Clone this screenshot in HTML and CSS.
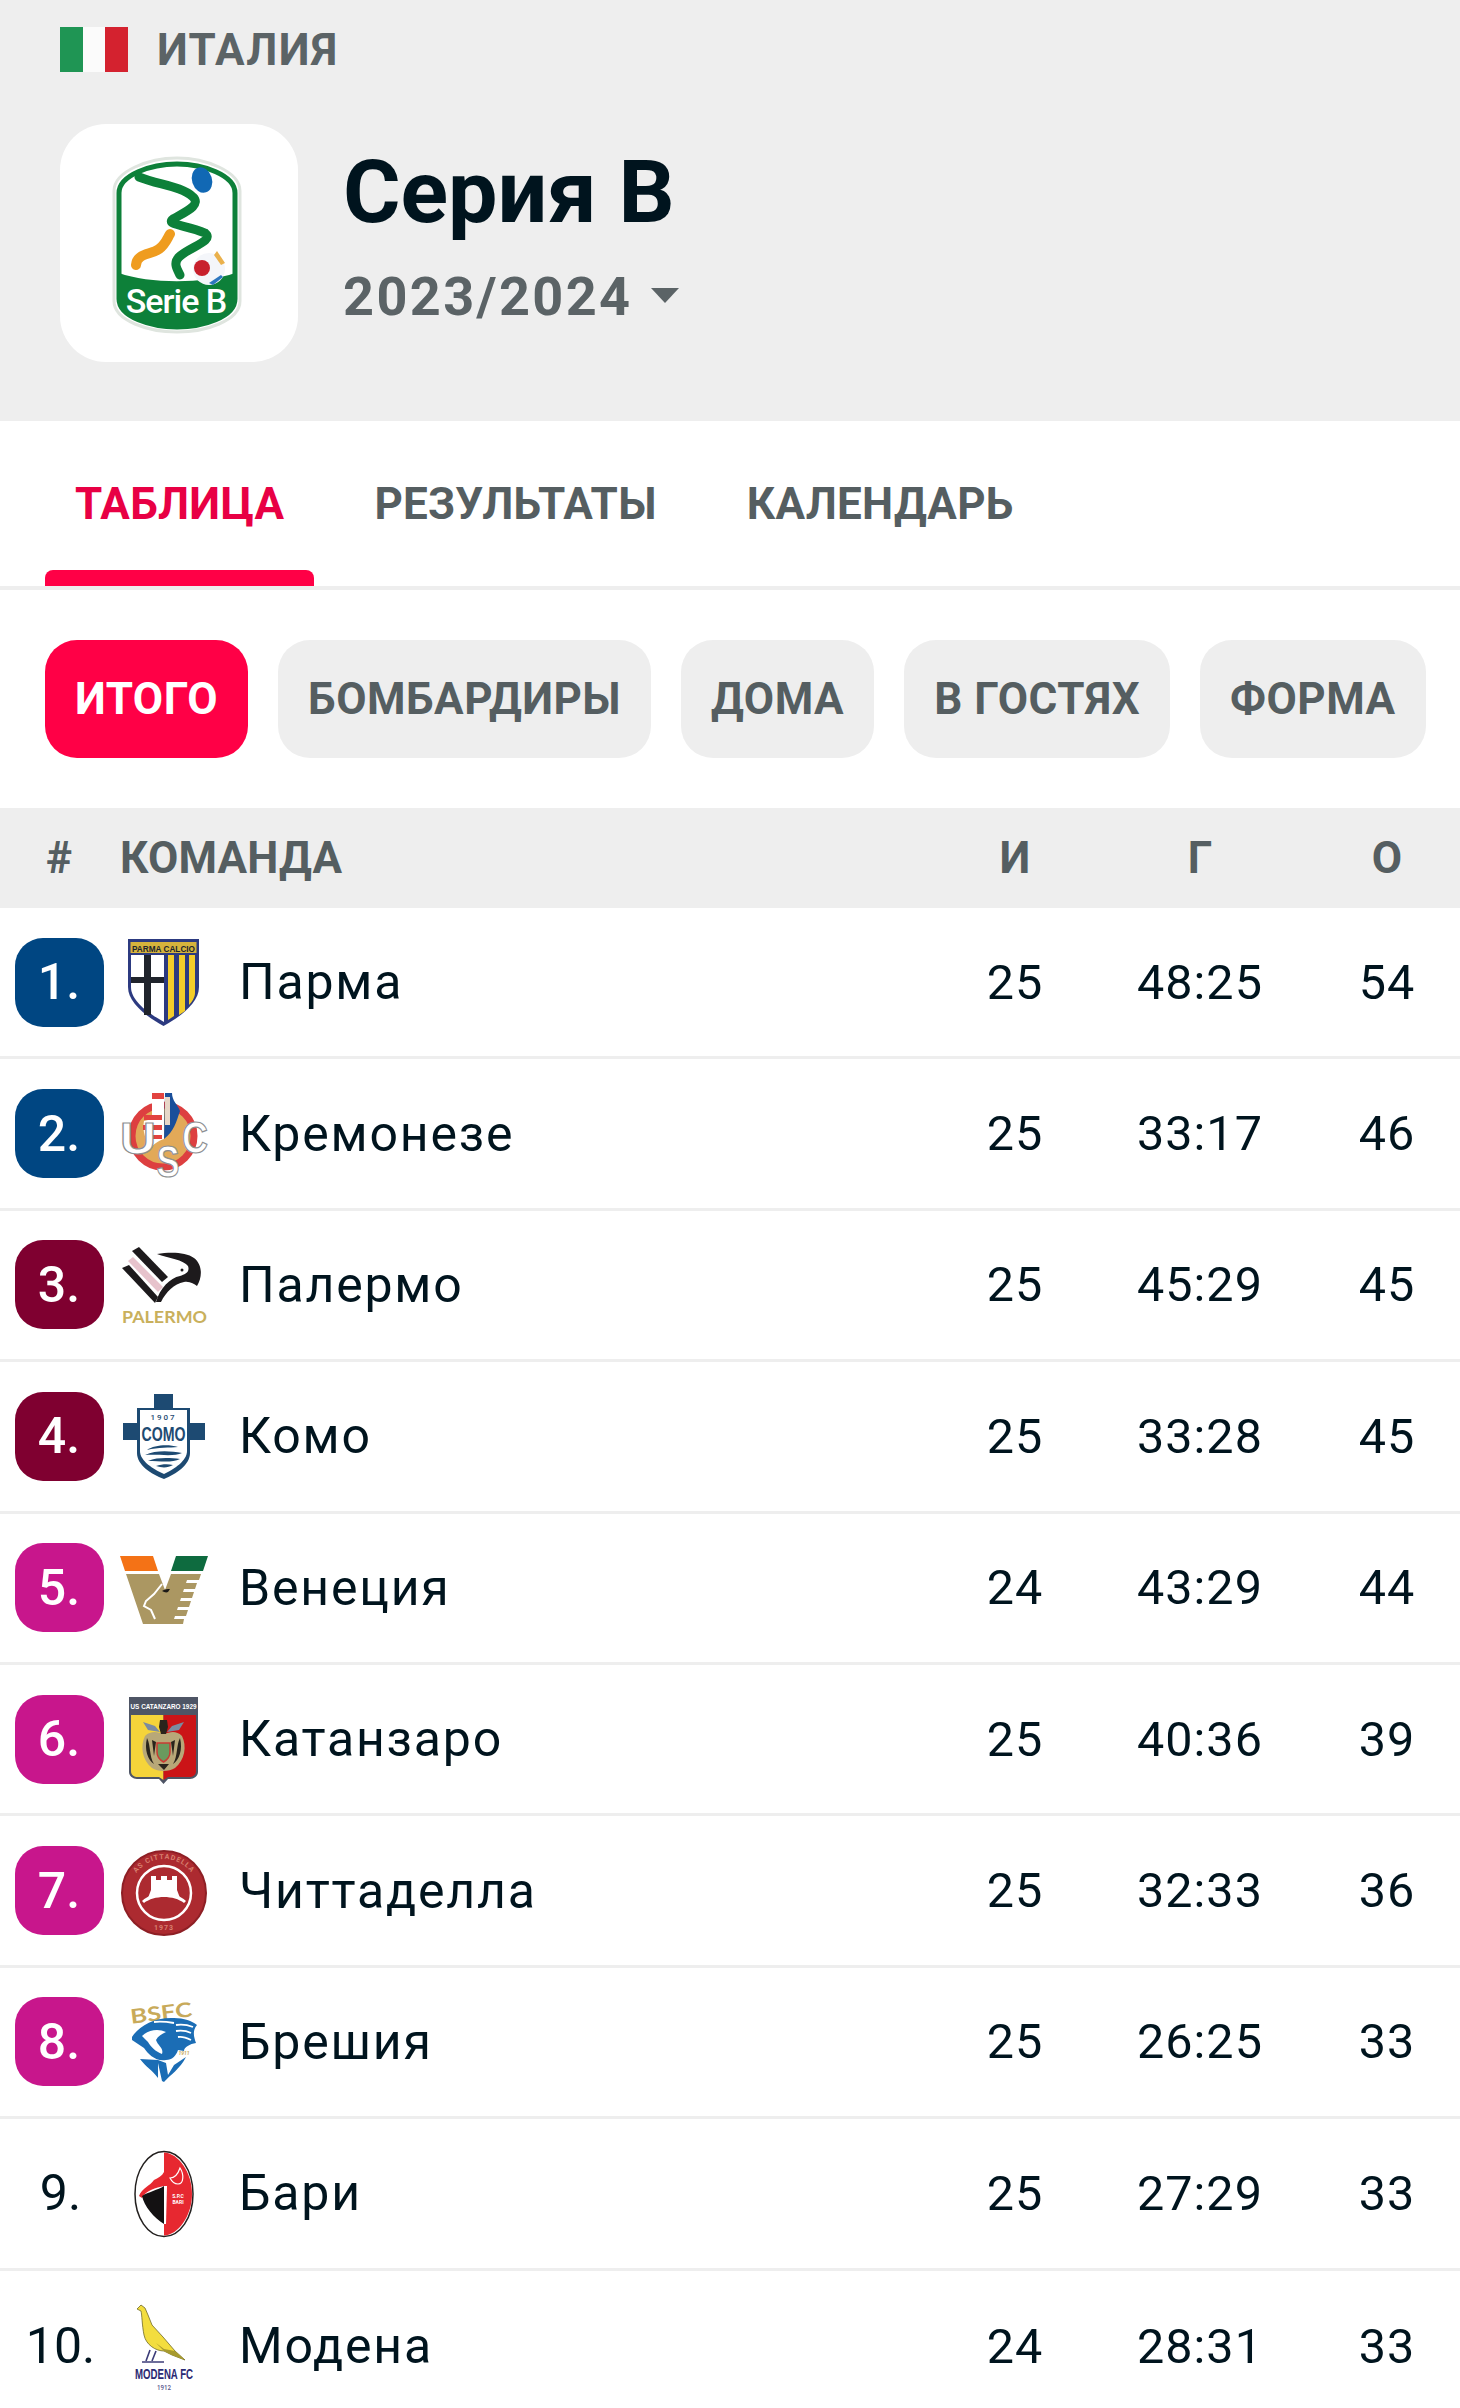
FILE: index.html
```html
<!DOCTYPE html>
<html lang="ru">
<head>
<meta charset="utf-8">
<title>Серия B</title>
<link rel="stylesheet" href="styles.css">
</head>
<body>
<header class="league">
  <div class="country">
    <span class="flag"><i class="flag-g"></i><i class="flag-w"></i><i class="flag-r"></i></span>
    <span class="country-name">ИТАЛИЯ</span>
  </div>
  <div class="league-main">
    <div class="tile">
      <svg class="serie-logo" viewBox="0 0 180 200">
        <path d="M25 48C25 28 60 15 88 15C116 15 151 28 151 48V158C151 178 116 189 88 189C60 189 25 178 25 158Z" fill="#fff" stroke="#dfe5df" stroke-width="3"/>
        <path d="M30 50C30 32 62 21 88 21C114 21 146 32 146 50V156C146 174 114 184 88 184C62 184 30 174 30 156Z" fill="#fff" stroke="#0d8039" stroke-width="5"/>
        <path d="M30 130C60 141 116 141 146 130V156C146 174 114 184 88 184C62 184 30 174 30 156Z" fill="#0d8039"/>
        <path d="M50 34C70 42 92 43 104 54C112 62 98 68 84 76C76 82 98 82 116 90C126 98 100 104 90 114C84 120 88 126 91 132" fill="none" stroke="#0d8039" stroke-width="9" stroke-linecap="round"/>
        <ellipse cx="113" cy="37" rx="10" ry="13" fill="#1168b4" transform="rotate(-18 113 37)"/>
        <path d="M47 122C48 110 62 112 70 106C76 102 78 96 81 91" fill="none" stroke="#ef9c1f" stroke-width="10" stroke-linecap="round"/>
        <circle cx="120" cy="126" r="16" fill="#f4f6fa"/>
        <circle cx="113" cy="125" r="8" fill="#c8202c"/>
        <path d="M128 108L136 120L132 122L125 112Z" fill="#eab14c"/>
        <path d="M120 140L132 132L134 134L124 142Z" fill="#2d76bf"/>
        <text class="serie-text" x="87" y="170" text-anchor="middle">Serie B</text>
      </svg>
    </div>
    <div class="league-title">
      <h1>Серия B</h1>
      <div class="season"><span>2023/2024</span><i class="caret"></i></div>
    </div>
  </div>
</header>

<nav class="tabs">
  <a class="tab tab-active">ТАБЛИЦА</a>
  <a class="tab">РЕЗУЛЬТАТЫ</a>
  <a class="tab">КАЛЕНДАРЬ</a>
</nav>

<div class="pills">
  <span class="pill pill-active">ИТОГО</span>
  <span class="pill">БОМБАРДИРЫ</span>
  <span class="pill">ДОМА</span>
  <span class="pill">В ГОСТЯХ</span>
  <span class="pill">ФОРМА</span>
</div>

<div class="thead">
  <span class="th-rank">#</span>
  <span class="th-team">КОМАНДА</span>
  <span class="num">И</span>
  <span class="num">Г</span>
  <span class="num">О</span>
</div>

<div class="row">
  <div class="rank"><span class="badge blue">1.</span></div>
  <svg class="crest" viewBox="0 0 90 90">
    <path d="M10 2H81V50C81 66 62 80 45.500 89C29 80 10 66 10 50Z" fill="#2c3a80"/>
    <path d="M13 18H46V85C30 76 13 64 13 50Z" fill="#fff"/>
    <rect x="26" y="18" width="7" height="60" fill="#20242c"/>
    <rect x="13" y="40" width="33" height="6" fill="#20242c"/>
    <path d="M50 18H56V79L50 83ZM61 18H67V74L61 78ZM71 18H77V56C77 60 74 65 71 68Z" fill="#f3cd2a"/>
    <rect x="12.500" y="5" width="66" height="11" fill="#d6b33c"/>
    <text class="t-parma" x="45.500" y="14.500" text-anchor="middle" textLength="63" lengthAdjust="spacingAndGlyphs">PARMA CALCIO</text>
  </svg>
  <span class="name">Парма</span><span class="num val">25</span><span class="num val">48:25</span><span class="num val">54</span>
</div>

<div class="row">
  <div class="rank"><span class="badge blue">2.</span></div>
  <svg class="crest" viewBox="0 0 90 90">
    <circle cx="45" cy="47" r="31" fill="#e2a958" stroke="#dd3f40" stroke-width="7"/>
    <path d="M34 4H46V50C40 52 34 56 33 60C28 52 24 42 26 32L34 30Z" fill="#fff"/>
    <path d="M26 26H44V31H26ZM25 36H44V41H25ZM28 46H44V50H28Z" fill="#e2433f"/>
    <path d="M34 4H46V10H34Z" fill="#e2433f"/>
    <path d="M47 4H54C54 12 60 16 62 22C58 34 56 42 46 50Z" fill="#1a4f9a"/>
    <path d="M47 8H52V36H47Z" fill="#e7d7c8"/>
    <text class="t-usc" x="20" y="65" text-anchor="middle" textLength="36" lengthAdjust="spacingAndGlyphs">U</text>
    <text class="t-usc" x="50" y="88" text-anchor="middle" textLength="23" lengthAdjust="spacingAndGlyphs">S</text>
    <text class="t-usc" x="77" y="64" text-anchor="middle" textLength="26" lengthAdjust="spacingAndGlyphs">C</text>
  </svg>
  <span class="name">Кремонезе</span><span class="num val">25</span><span class="num val">33:17</span><span class="num val">46</span>
</div>

<div class="row">
  <div class="rank"><span class="badge maroon">3.</span></div>
  <svg class="crest" viewBox="0 0 90 90">
    <path d="M14 11L21 7L50 37L44 42Z" fill="#1d1a1c"/>
    <path d="M10 21L15 17L45 47L40 52Z" fill="#e7c3cc"/>
    <path d="M4 28L11 25L40 57L37 63Z" fill="#1d1a1c"/>
    <path d="M39 14C52 12 68 12 76 18C84 24 85 36 79 46C76 44 72 41 66 42C56 44 48 52 43 62H38C42 48 52 38 62 36C68 34 72 32 70 26C66 20 50 18 39 14Z" fill="#1d1a1c"/>
    <circle cx="64" cy="30" r="1.500" fill="#1d1a1c"/>
    <text class="t-pal" x="46.500" y="83" text-anchor="middle" textLength="85" lengthAdjust="spacingAndGlyphs">PALERMO</text>
  </svg>
  <span class="name">Палермо</span><span class="num val">25</span><span class="num val">45:29</span><span class="num val">45</span>
</div>

<div class="row">
  <div class="rank"><span class="badge maroon">4.</span></div>
  <svg class="crest" viewBox="0 0 90 90">
    <path d="M36 3H55V17H72V32H87V49H72V62C72 74 58 83 46 88C33 83 19 74 19 62V49H5V32H19V17H36Z" fill="#1d4a72"/>
    <path d="M22 19H69V60C69 70 56 78 46 83C35 78 22 70 22 60Z" fill="#fff"/>
    <text class="t-year" x="45.500" y="29" text-anchor="middle">1907</text>
    <text class="t-como" x="45.500" y="50" text-anchor="middle" textLength="44" lengthAdjust="spacingAndGlyphs">COMO</text>
    <path d="M29 59C36 54 50 53 60 56C52 57 40 56 29 59ZM27 64C38 59 52 60 64 62C56 66 40 63 27 64ZM30 70C40 66 52 67 62 68C54 72 42 70 30 70ZM38 75C44 73 50 73 55 74C50 77 44 77 38 75Z" fill="#1d4a72"/>
  </svg>
  <span class="name">Комо</span><span class="num val">25</span><span class="num val">33:28</span><span class="num val">45</span>
</div>

<div class="row">
  <div class="rank"><span class="badge magenta">5.</span></div>
  <svg class="crest" viewBox="0 0 90 90">
    <path d="M2 13H35L40 28H7Z" fill="#f47216"/>
    <path d="M58 13H90L85 28H53Z" fill="#0e6b3f"/>
    <path d="M8 31H41L47 47L53 31H83L81 37H69L68 40H79L77 46H66L65 49H76L74 55H63L62 58H73L71 64H60L59 67H70L68 73H57L56 76H66L65 81H25Z" fill="#ab9762"/>
    <path d="M44 41L36 51L28 58L26 63L33 67L37 76" fill="none" stroke="#fff" stroke-width="2"/>
    <path d="M44 48C47 46 50 46 52 46L50 49C48 50 46 49 44 48Z" fill="#1c1a18"/>
  </svg>
  <span class="name">Венеция</span><span class="num val">24</span><span class="num val">43:29</span><span class="num val">44</span>
</div>

<div class="row">
  <div class="rank"><span class="badge magenta">6.</span></div>
  <svg class="crest" viewBox="0 0 90 90">
    <path d="M11 3H80V78C80 82 76 85 72 85H50L45.500 90L41 85H19C15 85 11 82 11 78Z" fill="#4e5565"/>
    <path d="M13 21H45.500V86L41 83H20C16 83 13 81 13 77Z" fill="#f5d43a"/>
    <path d="M45.500 21H78V77C78 81 75 83 71 83H50L45.500 86Z" fill="#cb1417"/>
    <path d="M27 42C22 52 24 66 34 74C40 78 51 78 57 74C67 66 69 52 64 42C58 36 52 38 46 40C40 38 33 36 27 42Z" fill="#b8a878"/>
    <path d="M29 44C33 52 31 62 36 70C30 66 26 56 29 44ZM62 44C58 52 60 62 55 70C61 66 65 56 62 44ZM34 46L38 48L36 62ZM57 46L53 48L55 62ZM40 70L46 76L51 70Z" fill="#29241c"/>
    <path d="M25 28L37 32L42 38L30 36ZM66 28L54 32L49 38L61 36Z" fill="#7b8ba0"/>
    <path d="M39 49H52V58C52 63 49 66 45.500 68C42 66 39 63 39 58Z" fill="#6a9a5e" stroke="#c93b33" stroke-width="1.500"/>
    <path d="M42 26H49L50 33L48 40H43L41 33Z" fill="#29241c"/>
    <text class="t-cat" x="45.500" y="15" text-anchor="middle" textLength="66" lengthAdjust="spacingAndGlyphs">US CATANZARO 1929</text>
  </svg>
  <span class="name">Катанзаро</span><span class="num val">25</span><span class="num val">40:36</span><span class="num val">39</span>
</div>

<div class="row">
  <div class="rank"><span class="badge magenta">7.</span></div>
  <svg class="crest" viewBox="0 0 90 90">
    <circle cx="46" cy="47" r="42" fill="#ac2a30" stroke="#8e1f25" stroke-width="2"/>
    <circle cx="46" cy="47" r="27" fill="none" stroke="#fff" stroke-width="2.500"/>
    <path d="M33 30H38V34H43V30H49V34H54V30H59V44L62 52L57 50C50 47 42 47 35 50L30 52L33 44Z" fill="#fff"/>
    <path d="M24 55C36 44 56 44 68 55L66 57C56 49 36 49 26 57Z" fill="#fff"/>
    <path id="cit-arc" d="M12 47A34 34 0 0 1 80 47" fill="none"/>
    <text class="t-cit"><textPath href="#cit-arc" startOffset="50%" text-anchor="middle">AS CITTADELLA</textPath></text>
    <text class="t-cit" x="46" y="84" text-anchor="middle">1973</text>
  </svg>
  <span class="name">Читтаделла</span><span class="num val">25</span><span class="num val">32:33</span><span class="num val">36</span>
</div>

<div class="row">
  <div class="rank"><span class="badge magenta">8.</span></div>
  <svg class="crest" viewBox="0 0 90 90">
    <text class="t-bsfc" x="44" y="23" text-anchor="middle" textLength="62" lengthAdjust="spacingAndGlyphs" transform="rotate(-7 44 23)">BSFC</text>
    <path d="M14 40C20 30 36 20 56 21C66 21 74 24 79 28C74 34 76 40 78 46C72 47 66 50 66 54L60 53C58 59 54 63 48 63C38 65 30 57 26 51L14 43Z" fill="#1b6db5"/>
    <path d="M58 28C64 27 70 28 75 30M58 34C64 33 69 34 73 36M60 40C65 39 69 41 73 43M36 25C44 24 50 25 56 26" fill="none" stroke="#fff" stroke-width="1.800"/>
    <path d="M24 39C30 33 40 31 48 35C44 37 40 39 38 43C40 49 46 51 44 57C38 55 32 49 30 45Z" fill="#fff"/>
    <path d="M22 62C28 70 34 73 40 81L40 66L44 84L46 85C52 78 62 72 68 60L56 68L50 78L48 66L40 63C34 63 28 62 22 62Z" fill="#1b6db5"/>
    <text class="t-br" x="66" y="58" text-anchor="middle">1911</text>
  </svg>
  <span class="name">Брешия</span><span class="num val">25</span><span class="num val">26:25</span><span class="num val">33</span>
</div>

<div class="row">
  <div class="rank"><span class="badge plain">9.</span></div>
  <svg class="crest" viewBox="0 0 90 90">
    <ellipse cx="46" cy="46" rx="29" ry="42.500" fill="#fff" stroke="#23201f" stroke-width="1.500"/>
    <path d="M46 4.500C60 5 74 24 74 46C74 68 60 87 46 87.500Z" fill="#e72830"/>
    <path d="M21 48C24 40 32 38 36 32C40 30 44 28 46 24V38C38 40 28 42 24 50Z" fill="#e72830"/>
    <path d="M24 48C30 44 40 42 46 38V76C36 70 26 58 24 48Z" fill="#131112"/>
    <path d="M46 38L49 38L48 76L46 76Z" fill="#fff"/>
    <path d="M52 30C56 30 60 26 62 20C66 26 66 36 60 36C56 36 54 34 52 30Z" fill="none" stroke="#fff" stroke-width="1.200"/>
    <text class="t-bari" x="60" y="50" text-anchor="middle">S.P.C</text>
    <text class="t-bari" x="60" y="56" text-anchor="middle">BARI</text>
  </svg>
  <span class="name">Бари</span><span class="num val">25</span><span class="num val">27:29</span><span class="num val">33</span>
</div>

<div class="row row-last">
  <div class="rank"><span class="badge plain">10.</span></div>
  <svg class="crest" viewBox="0 0 90 90">
    <path d="M23 4L27 7L30 14L34 24L45 36L57 50L67 59L54 54L46 50C38 50 28 44 26 34C24 24 24 14 23 10L19 8Z" fill="#f3dd3e" stroke="#6f6a2a" stroke-width=".8"/>
    <path d="M38 42L46 48L57 50L67 59L54 54L46 50Z" fill="#a79a2e"/>
    <path d="M32 49L28 60M38 50L34 60" stroke="#3c3c78" stroke-width="1.600" fill="none"/>
    <path d="M24 61H46" stroke="#3c3c78" stroke-width="1.500"/>
    <text class="t-mod" x="46" y="78" text-anchor="middle" textLength="58" lengthAdjust="spacingAndGlyphs">MODENA FC</text>
    <text class="t-mod2" x="46" y="89" text-anchor="middle" textLength="14" lengthAdjust="spacingAndGlyphs">1912</text>
  </svg>
  <span class="name">Модена</span><span class="num val">24</span><span class="num val">28:31</span><span class="num val">33</span>
</div>
</body>
</html>
```

FILE: styles.css
```css
* { box-sizing: border-box; }
html, body { margin: 0; padding: 0; background: #fff; }
body {
  width: 1460px;
  height: 2408px;
  overflow: hidden;
  font-family: Roboto, "Noto Sans", sans-serif;
  color: #00141e;
}

/* league header */
.league {
  background: #eee;
  height: 421px;
  padding: 27px 60px 0;
}
.country { display: flex; align-items: center; height: 45px; gap: 29px; }
.flag { display: flex; width: 68px; height: 45px; }
.flag i { flex: 1; }
.flag-g { background: #1f9554; }
.flag-w { background: #fbfbfb; }
.flag-r { background: #d4222f; }
.country-name { font-size: 44px; font-weight: 700; letter-spacing: 1.400px; color: #5b6366; }
.league-main { display: flex; align-items: center; gap: 45px; margin-top: 52px; }
.tile {
  width: 238px;
  height: 238px;
  background: #fff;
  border-radius: 46px;
  display: flex;
  align-items: center;
  justify-content: center;
}
.serie-logo { width: 180px; height: 200px; }
.serie-text { font: 500 34px Roboto, sans-serif; fill: #fff; letter-spacing: -1px; }
.league-title { margin-top: -16px; }
h1 { margin: 0; font-size: 88px; line-height: 108px; font-weight: 700; color: #00141e; }
.season {
  display: flex;
  align-items: center;
  gap: 18px;
  font-size: 54px;
  line-height: 70px;
  font-weight: 700;
  letter-spacing: 2.400px;
  color: #5b6366;
  margin-top: 16px;
}
.caret {
  width: 0;
  height: 0;
  border-left: 14px solid transparent;
  border-right: 14px solid transparent;
  border-top: 15px solid #5b6366;
  margin-bottom: 4px;
}

/* tabs */
.tabs {
  display: flex;
  height: 169px;
  padding-left: 45px;
  gap: 30px;
  border-bottom: 4px solid #eee;
}
.tab {
  display: flex;
  align-items: center;
  height: 165px;
  padding: 0 30px;
  font-size: 44px;
  font-weight: 700;
  letter-spacing: .3px;
  color: #555e61;
}
.tab-active {
  color: #e80044;
  position: relative;
}
.tab-active::after {
  content: "";
  position: absolute;
  left: 0;
  right: 0;
  bottom: 0;
  height: 16px;
  background: #ff0046;
  border-radius: 8px 8px 0 0;
}

/* pills */
.pills { display: flex; gap: 30px; padding: 50px 0 50px 45px; }
.pill {
  display: flex;
  align-items: center;
  height: 118px;
  padding: 0 30px;
  border-radius: 32px;
  background: #eee;
  font-size: 44px;
  font-weight: 700;
  letter-spacing: .5px;
  color: #555e61;
}
.pill-active { background: #ff0046; color: #fff; }

/* table */
.thead, .row {
  display: grid;
  align-items: center;
}
.thead {
  height: 100px;
  grid-template-columns: 118px 122px 1fr 142px 228px 146px;
  background: #eee;
  font-size: 44px;
  font-weight: 700;
  color: #555e61;
}
.th-rank { text-align: center; }
.th-team { grid-column: 2 / 4; padding-left: 2px; letter-spacing: .2px; }
.row {
  height: 151.400px;
  border-bottom: 3px solid #eee;
  grid-template-columns: 118px 90px 1fr 142px 228px 146px;
}
.row-last { border-bottom: 0; }
.rank { display: flex; justify-content: center; }
.badge {
  display: flex;
  align-items: center;
  justify-content: center;
  width: 89px;
  height: 89px;
  border-radius: 28px;
  font-size: 50px;
  font-weight: 500;
  color: #fff;
}
.blue { background: #004682; }
.maroon { background: #7f0030; }
.magenta { background: #c8168c; }
.plain { background: transparent; color: #00141e; font-weight: 400; padding-left: 3px; }
.crest { width: 90px; height: 90px; overflow: visible; }
.name { font-size: 50px; letter-spacing: 1.800px; padding-left: 31px; color: #00141e; }
.num { text-align: center; }
.val { font-size: 48.500px; letter-spacing: 1px; color: #00141e; }

/* crest lettering */
.t-parma { font: 700 9.500px "Liberation Sans", sans-serif; fill: #20242c; }
.t-usc { font: 700 44px "Liberation Sans", sans-serif; fill: #fff; stroke: #8d8f92; stroke-width: 1.200px; }
.t-pal { font: 700 17px Lato, sans-serif; fill: #c9b05c; }
.t-year { font: 500 8px Roboto, sans-serif; fill: #1d4a72; letter-spacing: 2px; }
.t-como { font: 700 21px "Liberation Sans", sans-serif; fill: #1d4a72; }
.t-cat { font: 700 7px "Liberation Sans", sans-serif; fill: #fff; }
.t-cit { font: 700 7px Roboto, sans-serif; fill: #d8806f; letter-spacing: 1px; }
.t-bsfc { font: 700 20px Lato, sans-serif; fill: #c8aa5a; }
.t-br { font: italic 700 5px Roboto, sans-serif; fill: #c8aa5a; }
.t-bari { font: 700 5px Roboto, sans-serif; fill: #fff; }
.t-mod { font: 700 15px "Liberation Sans", sans-serif; fill: #2b2a73; }
.t-mod2 { font: 500 8px Roboto, sans-serif; fill: #55558c; }
```
